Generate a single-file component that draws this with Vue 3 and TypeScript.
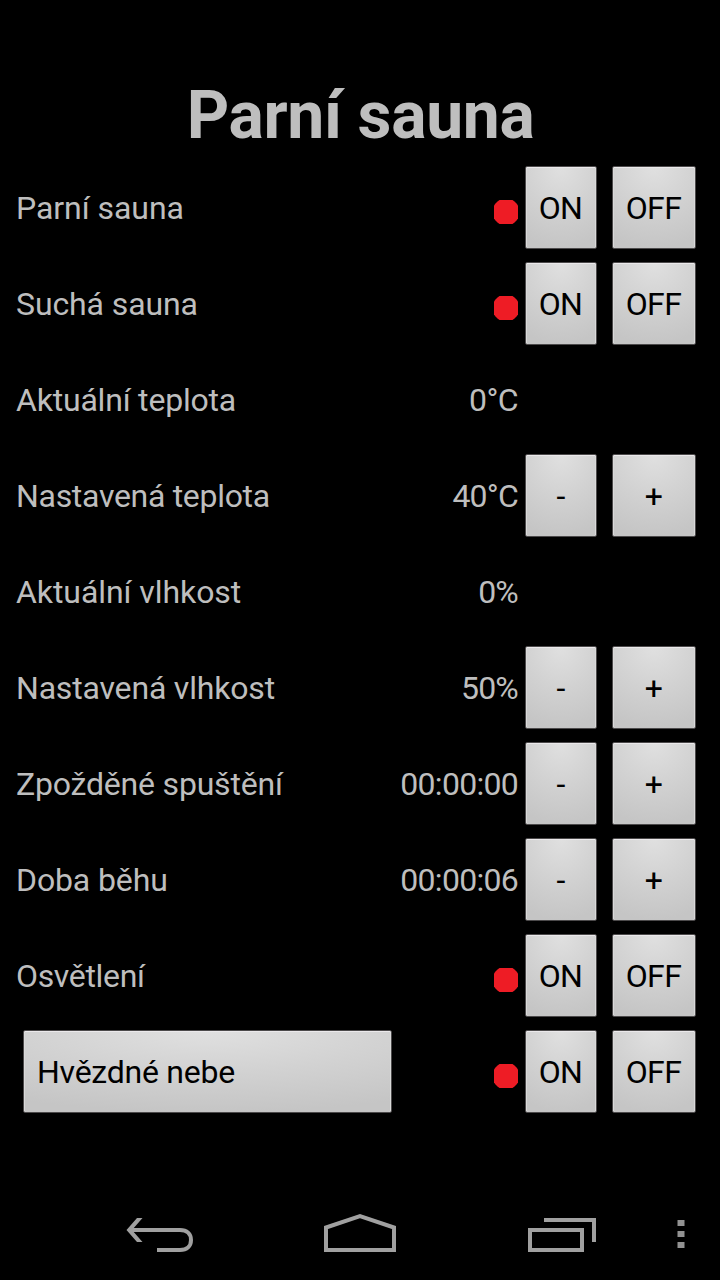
<script setup lang="ts">
interface Row {
  label: string
  tracking: number
  value?: string
  valueTracking?: number
  indicator?: boolean
  buttons?: [string, string]
  boxed?: boolean
}

const rows: Row[] = [
  { label: 'Parní sauna', tracking: -0.05, indicator: true, buttons: ['ON', 'OFF'] },
  { label: 'Suchá sauna', tracking: -0.1, indicator: true, buttons: ['ON', 'OFF'] },
  { label: 'Aktuální teplota', tracking: -0.2, value: '0°C', valueTracking: -0.6 },
  { label: 'Nastavená teplota', tracking: -0.3, value: '40°C', valueTracking: -0.8, buttons: ['-', '+'] },
  { label: 'Aktuální vlhkost', tracking: -0.07, value: '0%', valueTracking: -0.8 },
  { label: 'Nastavená vlhkost', tracking: -0.18, value: '50%', valueTracking: -0.8, buttons: ['-', '+'] },
  { label: 'Zpožděné spuštění', tracking: -0.2, value: '00:00:00', valueTracking: -0.72, buttons: ['-', '+'] },
  { label: 'Doba běhu', tracking: -0.12, value: '00:00:06', valueTracking: -0.72, buttons: ['-', '+'] },
  { label: 'Osvětlení', tracking: -0.33, indicator: true, buttons: ['ON', 'OFF'] },
  { label: 'Hvězdné nebe', tracking: -0.25, indicator: true, buttons: ['ON', 'OFF'], boxed: true },
]
</script>

<template>
  <div class="screen">
    <h1 class="title">Parní sauna</h1>
    <main class="rows">
      <div v-for="row in rows" :key="row.label" class="row">
        <button v-if="row.boxed" class="btn wide">
          <span :style="{ letterSpacing: row.tracking + 'px' }">{{ row.label }}</span>
        </button>
        <span v-else class="label" :style="{ letterSpacing: row.tracking + 'px' }">{{ row.label }}</span>
        <div class="value">
          <svg v-if="row.indicator" class="dot" viewBox="0 0 24 24">
            <path d="M5.500 0H18.500L20.500 1.500L22.500 3.500L24 5.500V18.500L22.500 20.500L20.500 22.500L18.500 24H5.500L3.500 22.500L1.500 20.500L0 18.500V5.500L1.500 3.500L3.500 1.500Z" fill="#ee1c25" />
          </svg>
          <span v-else :style="{ letterSpacing: (row.valueTracking ?? 0) + 'px' }">{{ row.value }}</span>
        </div>
        <template v-if="row.buttons">
          <button v-for="b in row.buttons" :key="b" class="btn">{{ b }}</button>
        </template>
      </div>
    </main>
    <nav class="navbar">
      <svg viewBox="0 0 720 96" width="720" height="96" fill="none" stroke="#a0a0a0" stroke-width="4">
        <path d="M129 46H180C187 46 191 50 191 56C191 62 187 66 180 66H157" />
        <path d="M126.500 46L137 34H142.500L132 46L142.500 58H137Z" fill="#a0a0a0" stroke="none" />
        <path d="M326 66V43.500L360 32L394 43.500V66Z" />
        <path d="M530 46H582V66H530Z" />
        <path d="M544 36H594V58" />
        <path d="M677.500 36H684.500V42H677.500ZM677.500 47H684.500V53H677.500ZM677.500 58H684.500V64H677.500Z" fill="#929292" stroke="none" />
      </svg>
    </nav>
  </div>
</template>

<style>
body {
  margin: 0;
  background: #000;
}
</style>

<style scoped>
.screen {
  display: flex;
  flex-direction: column;
  width: 720px;
  height: 1280px;
  background: #000;
  color: #bebebe;
  font-family: Roboto, "Noto Sans", sans-serif;
  font-size: 32px;
  overflow: hidden;
}
.title {
  box-sizing: border-box;
  height: 160px;
  margin: 0;
  padding: 76px 0 0 1px;
  font-size: 66px;
  line-height: 80px;
  font-weight: 700;
  letter-spacing: -0.35px;
  text-align: center;
}
.row {
  display: grid;
  grid-template-columns: 376px 126px 79px 99px;
  align-items: center;
  height: 96px;
  padding-left: 16px;
  white-space: nowrap;
}
.label {
  line-height: 38px;
}
.value {
  display: flex;
  justify-content: flex-end;
  line-height: 38px;
}
.dot {
  width: 24px;
  height: 24px;
  margin-top: 8px;
}
.btn {
  box-sizing: border-box;
  width: 72px;
  height: 83px;
  margin: -1px 0 0 7px;
  padding: 0 1px 0 0;
  border: 1px solid #4c4a4b;
  border-radius: 2px;
  background: radial-gradient(ellipse 100% 100% at 50% 0, #e0e0e0 0%, #d2d2d2 50%, #c5c5c5 100%) padding-box;
  box-shadow: inset 0 1px #ebe9eb, inset 1px 0 #d9d9d9, inset -1px 0 #d9d9d9;
  color: #000;
  font: inherit;
  line-height: 38px;
  letter-spacing: -0.6px;
}
.btn:last-child {
  width: 84px;
  margin-left: 15px;
}
.btn.wide {
  width: 369px;
  padding-left: 13px;
  text-align: left;
}
.navbar {
  height: 96px;
  margin-top: auto;
}
.navbar svg {
  display: block;
}
</style>
